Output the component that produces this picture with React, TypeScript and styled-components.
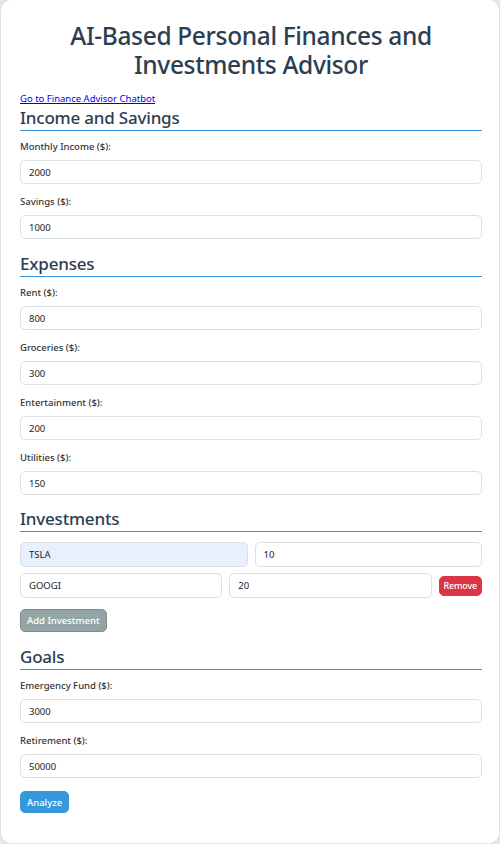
import React from "react";
import styled, { createGlobalStyle } from "styled-components";

const Global = createGlobalStyle`
  html, body { margin: 0; padding: 0; background: #e4e9f0; }
  body { font-family: "Segoe UI", "Noto Sans", sans-serif; }
  * { box-sizing: border-box; }
`;

const Container = styled.div`
  margin: 0 1px;
  min-height: 843px;
  background: #ffffff;
  border-radius: 10px;
  box-shadow: 0 0 4px rgba(0, 0, 0, 0.08);
  padding: 21px 17px 20px 19px;
  display: flex;
  flex-direction: column;
`;

const Title = styled.h1`
  margin: 0;
  text-align: center;
  font-size: 24.5px;
  letter-spacing: -0.35px;
  line-height: 29px;
  font-weight: 500;
  color: #2c3e50;
  padding: 0 40px;
`;

const ChatLink = styled.a`
  margin-top: 13px;
  font-size: 9.5px;
  line-height: 13px;
  color: #0000ee;
  text-decoration: underline;
  align-self: flex-start;
`;

const SectionTitle = styled.h2<{ $gap: number }>`
  margin: ${(p) => p.$gap}px 0 0;
  font-size: 17px;
  letter-spacing: -0.2px;
  line-height: 22px;
  font-weight: 500;
  color: #2c3e50;
  border-bottom: 1px solid #3498db;
  padding-bottom: 1px;
`;

const Field = styled.div<{ $first?: boolean }>`
  display: flex;
  flex-direction: column;
  margin-top: ${(p) => (p.$first ? 9 : 11)}px;
`;

const Label = styled.label`
  font-size: 9.5px;
  line-height: 13px;
  font-weight: 500;
  color: #333;
  margin-bottom: 7px;
`;

const Input = styled.input<{ $filled?: boolean; $tall?: boolean }>`
  width: 100%;
  min-width: 0;
  height: ${(p) => (p.$tall ? 25 : 24)}px;
  border: 1px solid #dcdfe4;
  border-radius: 5px;
  padding: 0 8px;
  font-family: inherit;
  font-size: 9.5px;
  color: #222;
  background: ${(p) => (p.$filled ? "#e8f0fe" : "#ffffff")};
  outline: none;
`;

const InvRow = styled.div<{ $top: number }>`
  display: flex;
  align-items: center;
  gap: 7px;
  margin-top: ${(p) => p.$top}px;
`;

const Button = styled.button<{ $bg: string; $border?: string }>`
  font-family: inherit;
  font-size: 9.5px;
  font-weight: 500;
  color: #ffffff;
  background: ${(p) => p.$bg};
  border: 1px solid ${(p) => p.$border ?? p.$bg};
  border-radius: 5px;
  padding: 0 6px;
  cursor: pointer;
  white-space: nowrap;
`;

const RemoveButton = styled(Button)`
  height: 20px;
  padding: 0 4px;
  font-size: 9px;
  letter-spacing: -0.2px;
  flex: none;
`;

const AddButton = styled(Button)`
  align-self: flex-start;
  height: 23px;
  margin-top: 11px;
`;

const AnalyzeButton = styled(Button)`
  align-self: flex-start;
  height: 22px;
  margin-top: 13px;
  padding: 0 6px;
`;

const fields = {
  income: [
    ["Monthly Income ($):", "2000"],
    ["Savings ($):", "1000"],
  ],
  expenses: [
    ["Rent ($):", "800"],
    ["Groceries ($):", "300"],
    ["Entertainment ($):", "200"],
    ["Utilities ($):", "150"],
  ],
  goals: [
    ["Emergency Fund ($):", "3000"],
    ["Retirement ($):", "50000"],
  ],
};

const FieldList = ({ items }: { items: string[][] }) => (
  <>
    {items.map(([label, value], i) => (
      <Field key={label} $first={i === 0}>
        <Label>{label}</Label>
        <Input defaultValue={value} />
      </Field>
    ))}
  </>
);

export default function App() {
  return (
    <>
      <Global />
      <Container>
        <Title>AI-Based Personal Finances and Investments Advisor</Title>
        <ChatLink href="#">Go to Finance Advisor Chatbot</ChatLink>

        <SectionTitle $gap={2}>Income and Savings</SectionTitle>
        <FieldList items={fields.income} />

        <SectionTitle $gap={14}>Expenses</SectionTitle>
        <FieldList items={fields.expenses} />

        <SectionTitle $gap={13}>Investments</SectionTitle>
        <InvRow $top={10}>
          <Input $filled $tall defaultValue="TSLA" />
          <Input $tall defaultValue="10" />
        </InvRow>
        <InvRow $top={6}>
          <Input $tall defaultValue="GOOGI" />
          <Input $tall defaultValue="20" />
          <RemoveButton $bg="#dc3545">Remove</RemoveButton>
        </InvRow>
        <AddButton $bg="#95a5a6" $border="#7f8c8d">
          Add Investment
        </AddButton>

        <SectionTitle $gap={14}>Goals</SectionTitle>
        <FieldList items={fields.goals} />

        <AnalyzeButton $bg="#3498db">Analyze</AnalyzeButton>
      </Container>
    </>
  );
}
